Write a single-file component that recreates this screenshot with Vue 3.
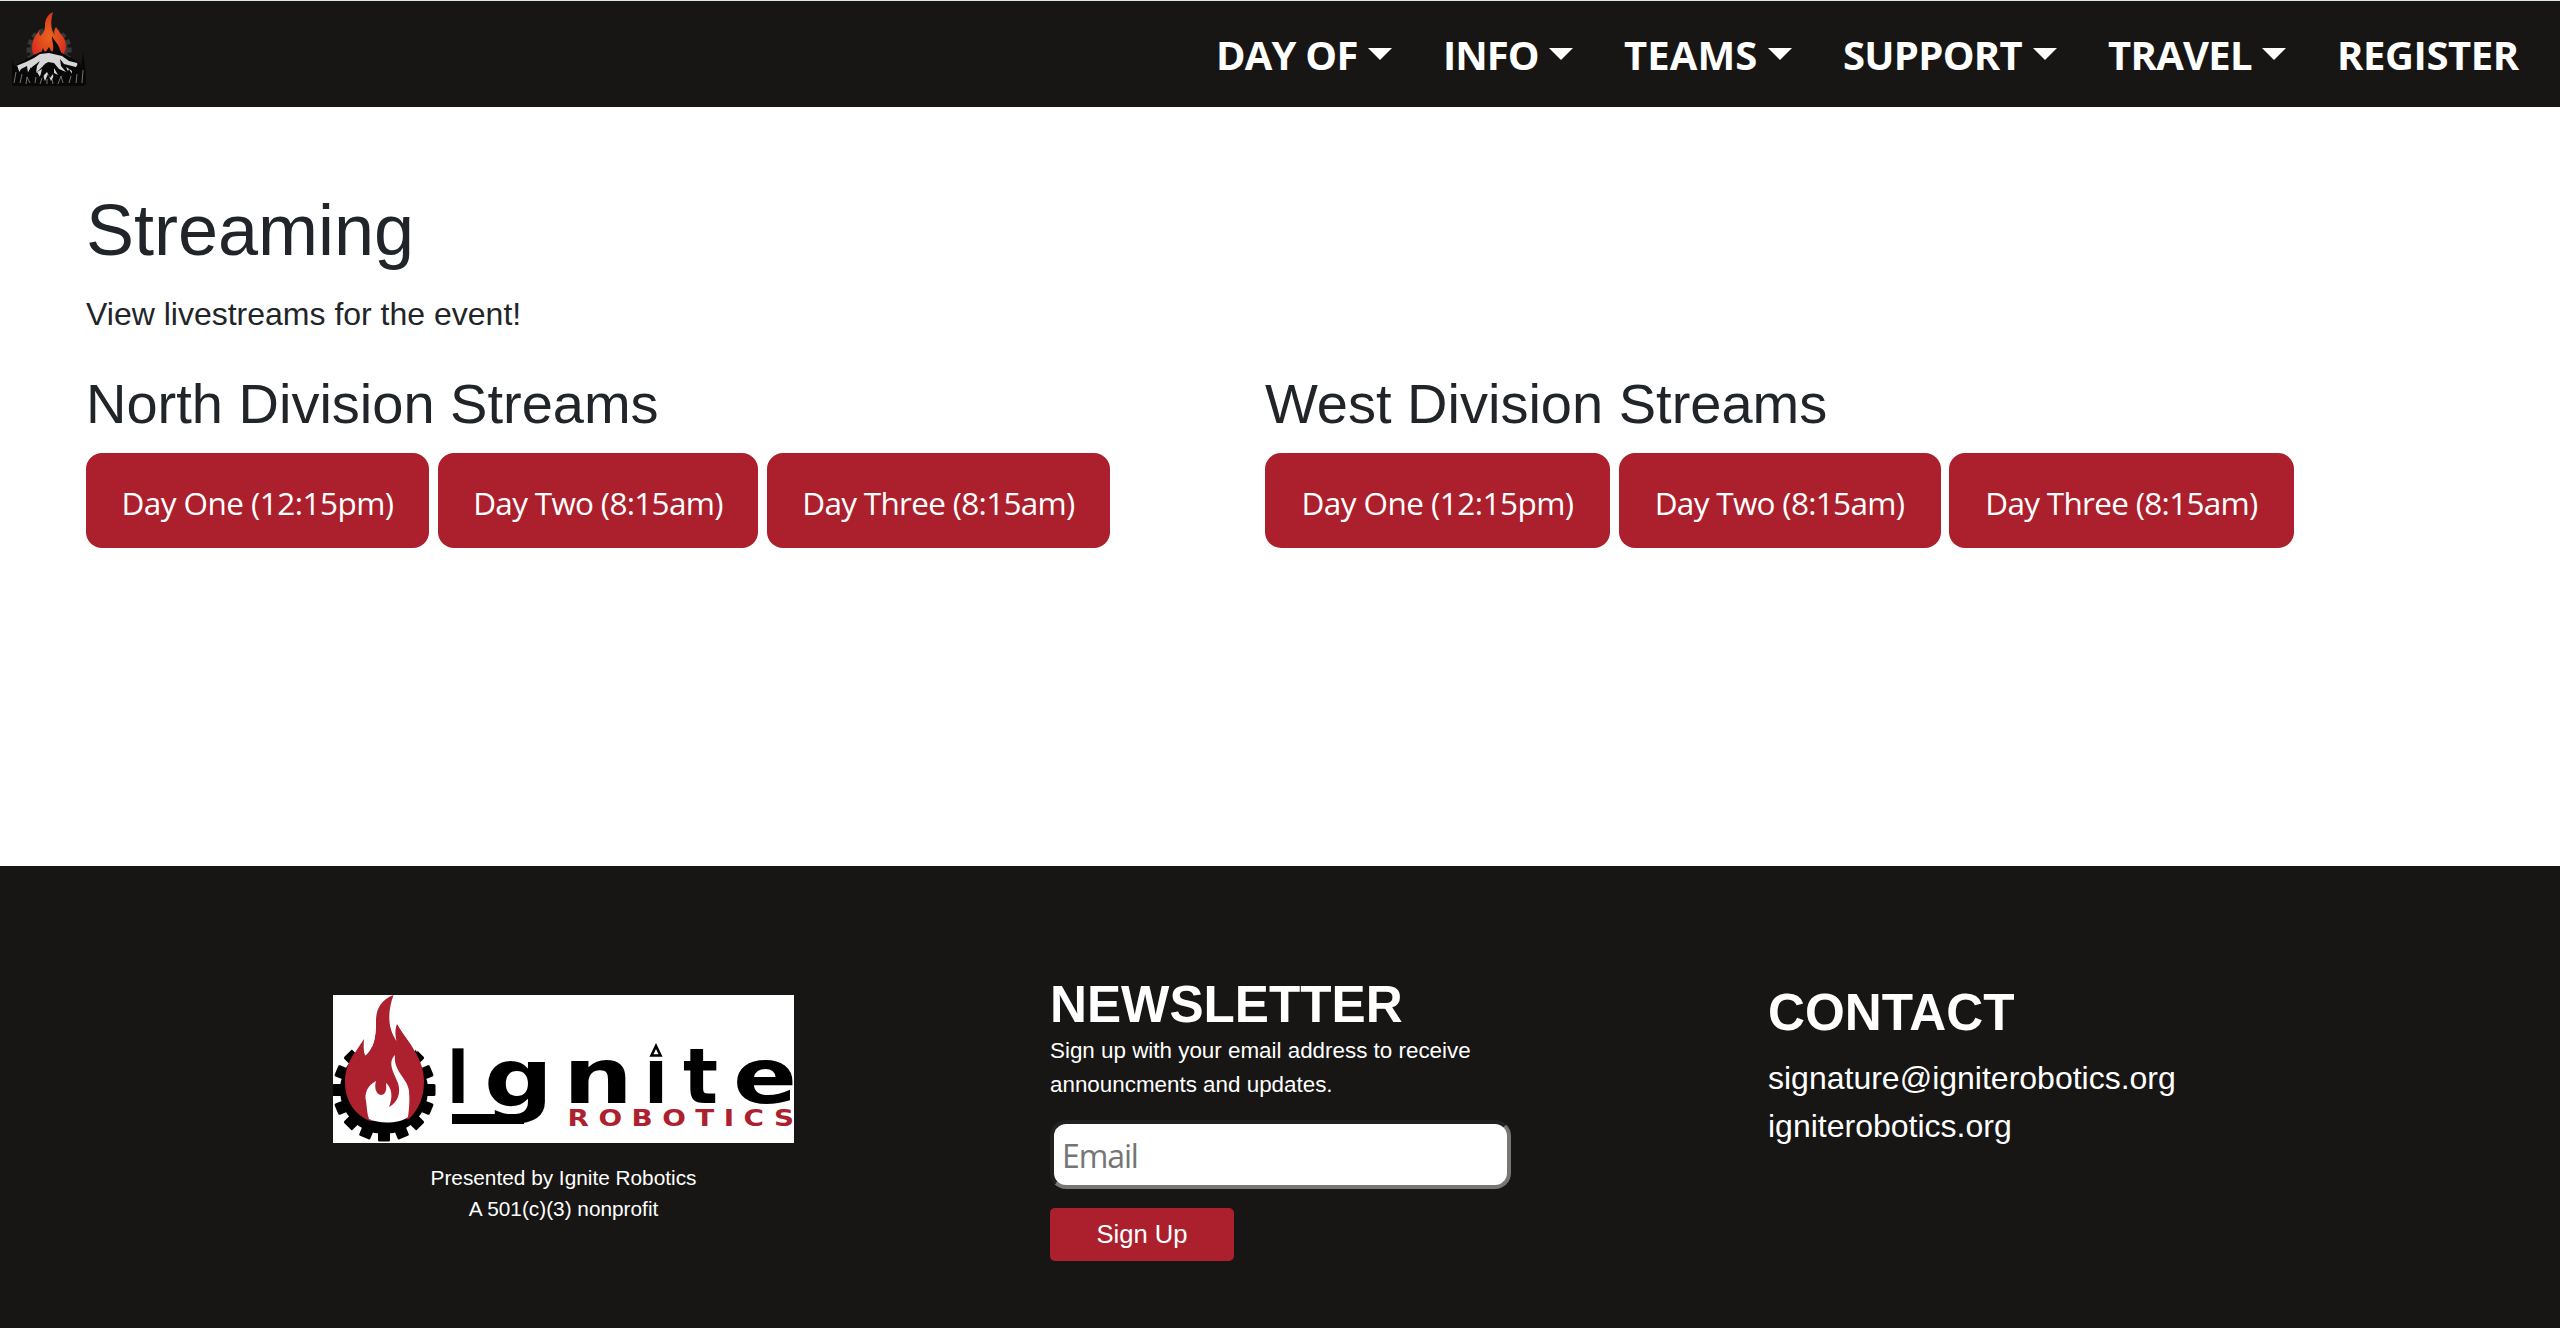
<script setup>
const menu = [
  { label: 'DAY OF', caret: true, cls: 'm-day' },
  { label: 'INFO', caret: true, cls: 'm-info' },
  { label: 'TEAMS', caret: true, cls: 'm-teams' },
  { label: 'SUPPORT', caret: true, cls: 'm-support' },
  { label: 'TRAVEL', caret: true, cls: 'm-travel' },
  { label: 'REGISTER', caret: false, cls: 'm-register' }
]
const days = [
  { label: 'Day One (12:15pm)', cls: 'd-one' },
  { label: 'Day Two (8:15am)', cls: 'd-two' },
  { label: 'Day Three (8:15am)', cls: 'd-three' }
]
const divisions = [
  { name: 'North Division Streams', cls: 'north' },
  { name: 'West Division Streams', cls: 'west' }
]
const gearTeeth = Array.from({ length: 16 }, (_, i) => i * 22.5)
</script>

<template>
  <div class="page">
    <header class="nav">
      <svg class="badge" width="74" height="76" viewBox="0 0 74 76">
        <defs>
          <radialGradient id="fire" cx="0.5" cy="0.5" r="0.6">
            <stop offset="0" stop-color="#e8641c" />
            <stop offset="0.5" stop-color="#e04a1e" />
            <stop offset="1" stop-color="#d8261f" />
          </radialGradient>
        </defs>
        <g fill="#383838">
          <circle cx="37" cy="38" r="19" />
          <rect v-for="a in gearTeeth" :key="a" x="34.500" y="15.500" width="5" height="6" :transform="`rotate(${a} 37 38)`" />
        </g>
        <path fill="url(#fire)" d="M41 0C35 3 33 8 33 14C33 18 31 22 28 24C27 22 27 20 28 18C22 24 20 30 20 36C20 43 24 48 37 48C48 48 54 42 54 34C54 26 48 22 44 15C42 18 42 20 43 23C39 19 38 10 41 0Z" />
        <path fill="#0a0a0a" d="M40 24C42 29 47 32 48 38L51 44L28 44L31 36L33 41L37 35L40 41C43 35 40 31 40 24Z" />
        <path fill="#080808" d="M2 54L20 44L28 40L37 39L50 41L66 50L72 74L1 74Z" />
        <path fill="#d6d6d6" d="M4 54L14 50L22 46L28 42L37 41L50 44L57 49L65 51L67 56L60 54L52 52L48 47L49 54L54 60L47 57L42 51L36 50L30 55L24 61L25 54L28 49L20 55L16 61L15 54L9 57L6 62Z" />
        <path fill="#d6d6d6" d="M25 60L30 57L28 65ZM42 56L46 63L42 61ZM54 55L60 59L59 66ZM32 63L35 60L38 66L41 62L42 70L30 70Z" />
        <path fill="#080808" d="M0 48L3 56L5 53L8 62L12 56L14 64L19 55L20 64L24 59L26 68L30 61L33 69L36 62L39 69L43 62L46 68L49 58L53 65L57 57L60 62L64 55L67 50L69 54L71 41L74 60V73H0ZM31 54L34 51L38 53L43 52L42 57L38 60L34 57Z" />
        <path fill="none" stroke="#a0a0a0" stroke-width="0.700" d="M2 71L4 60M8 71L10 62M14 72L15 65L18 71M23 71L24 65M28 72L30 66M35 72V67M41 72L40 67M46 72L49 64L51 71M57 71L59 64M64 71L65 62M70 71L71 58" />
      </svg>
      <nav class="menu">
        <a v-for="m in menu" :key="m.label" class="item" :class="m.cls"><span class="label">{{ m.label }}</span><i v-if="m.caret" class="caret"></i></a>
      </nav>
    </header>

    <main class="main">
      <h1>Streaming</h1>
      <p class="lead">View livestreams for the event!</p>
      <div class="divisions">
        <section v-for="d in divisions" :key="d.name" :class="d.cls">
          <h2>{{ d.name }}</h2>
          <div class="buttons">
            <a v-for="b in days" :key="b.label" class="btn" :class="b.cls"><span>{{ b.label }}</span></a>
          </div>
        </section>
      </div>
    </main>

    <footer class="footer">
      <div class="brand">
        <svg class="logo" width="461" height="148" viewBox="0 0 461 148">
          <rect width="461" height="148" fill="#fff" />
          <circle cx="51" cy="95" r="44" />
          <rect v-for="a in gearTeeth" :key="a" x="45" y="43.500" width="12" height="12" rx="1.500" :transform="`rotate(${a} 51 95)`" />
          <path fill="#ad202e" stroke="#fff" stroke-width="0" d="M60.500 0C48 5 43 14 43 26C43 42 41 54 32 61C30 56 30 50 31 44C22 58 12 68 12 87C12 106 22 120 37 126L76 124C86 114 91 102 91 86C91 64 76 48 64 29C62 34 62 40 63.500 46C55 34 54 18 60.500 0Z" />
          <path fill="#fff" d="M25 62L31 44C30 50 30 56 32 61C41 54 43 42 43 26L36 26V44H20V54ZM66 32C72 42 80 51 84 57L90 48L72 26Z" />
          <path fill="#ad202e" d="M31 44C26 52 18 62 15 71L32 75L50 60L43 42C41 52 39 57 32 61C30 56 30 50 31 44Z" />
          <path fill="#fff" d="M62 60C54 68 61 78 65 88C68 98 65 107 56 112C60 102 59 93 53 88C54 96 52 100 48 100C43 99 41 93 43 86C35 90 31 98 33 106C34 113 34 119 36 124C46 129 66 129 75 122C76 114 77 106 76 96C75 84 60 76 62 60Z" />
          <g class="word">
            <text x="114" y="107.500" font-size="74" textLength="22" lengthAdjust="spacingAndGlyphs">I</text>
            <text x="151" y="110.500" font-size="80" textLength="69" lengthAdjust="spacingAndGlyphs">g</text>
            <text x="230" y="107.500" font-size="76" textLength="70" lengthAdjust="spacingAndGlyphs">n</text>
            <text x="311" y="107.500" font-size="76" textLength="24" lengthAdjust="spacingAndGlyphs">i</text>
            <text x="350" y="107.500" font-size="76" textLength="35" lengthAdjust="spacingAndGlyphs">t</text>
            <text x="400" y="107.500" font-size="76" textLength="64" lengthAdjust="spacingAndGlyphs">e</text>
          </g>
          <rect x="119" y="119" width="72" height="10" />
          <rect x="314" y="46" width="18" height="18.500" fill="#fff" />
          <path d="M323 51L327.500 60.500H318.500Z" fill="none" stroke="#000" stroke-width="2.600" />
          <text class="sub" x="234.500" y="131" font-size="23.500" textLength="236" lengthAdjust="spacingAndGlyphs">ROBOTICS</text>
        </svg>
        <p>Presented by Ignite Robotics<br />A 501(c)(3) nonprofit</p>
      </div>
      <form class="news">
        <h3>NEWSLETTER</h3>
        <p>Sign up with your email address to receive announcments and updates.</p>
        <input type="text" placeholder="Email" />
        <button type="button">Sign Up</button>
      </form>
      <div class="contact">
        <h3>CONTACT</h3>
        <p>signature@igniterobotics.org<br />igniterobotics.org</p>
      </div>
    </footer>
  </div>
</template>

<style>
body { margin: 0; background: #fff; }
</style>

<style scoped>
* { box-sizing: border-box; }
.page { display: flex; flex-direction: column; width: 2560px; height: 1328px; overflow: hidden; font-family: "Liberation Sans", Arial, sans-serif; color: #212529; }
h1, h2, h3, p { margin: 0; font-weight: 400; }

.nav { display: flex; justify-content: space-between; align-items: flex-start; height: 107px; flex: none; border-top: 1px solid #dce9df; background: #171614; padding: 11px 37px 0 12px; }
.menu { display: flex; padding-top: 15px; color: #fff; font: 700 40px/56px "Open Sans", "Noto Sans", sans-serif; }
.item { display: flex; white-space: nowrap; }
.label { flex: none; }
.caret { width: 24px; height: 12px; margin-top: 21px; background: #fff; clip-path: polygon(0 0, 100% 0, 50% 100%); margin-left: auto; }
.m-day { width: 176px; margin-right: 51px; letter-spacing: -0.8px; }
.m-info { width: 130px; margin-right: 51px; letter-spacing: -1px; }
.m-teams { width: 168px; margin-right: 51px; letter-spacing: 0.1px; }
.m-support { width: 214px; margin-right: 51px; letter-spacing: -0.7px; }
.m-travel { width: 178px; margin-right: 51px; letter-spacing: -0.7px; }
.m-register { width: 186px; letter-spacing: -0.400px; }

.main { flex: none; height: 759px; padding: 80px 86px 0; }
h1 { font-size: 72px; line-height: 86px; }
.lead { font-size: 32px; line-height: 48px; margin-top: 17px; }
.divisions { display: flex; margin-top: 32px; }
.north, .west { width: 1179px; }
h2 { font-size: 56px; line-height: 67px; }
.buttons { display: flex; gap: 9px; margin-top: 16px; }
.btn { display: flex; justify-content: center; align-items: center; height: 95px; border-radius: 16px; background: #ac1f2d; color: #fff; font: 31.500px/48px "Open Sans", "Noto Sans", sans-serif; letter-spacing: -0.550px; white-space: nowrap; padding-top: 4px; }
.d-one, .d-three { width: 343px; }
.d-two, .d-three { letter-spacing: -0.700px; }
.d-two { width: 320px; }
.west .d-one, .west .d-three { width: 345px; }
.west .d-two { width: 322px; }
.west .buttons { gap: 8.500px; }

.footer { display: flex; flex: 1; background: #171614; color: #fff; }
.brand { width: 461px; margin: 129px 256px 0 333px; text-align: center; }
.logo { display: block; }
.brand p { font-size: 20.800px; line-height: 31.200px; margin-top: 19px; }
.word { font-family: "DejaVu Sans", sans-serif; font-weight: 700; }
.sub { font-family: "DejaVu Sans", sans-serif; font-weight: 700; letter-spacing: 8px; fill: #ad202e; }
.news { width: 461px; margin: 108px 257px 0 0; }
h3 { font-weight: 700; font-size: 51.200px; line-height: 61px; }
.news p { font-size: 22.400px; line-height: 33.600px; margin-top: -1px; }
input { display: block; width: 461px; height: 69px; margin-top: 19px; padding: 3px 8px 1px; border: 4px inset #767676; border-radius: 16px; background: #fff; font: 32px "Open Sans", "Noto Sans", sans-serif; letter-spacing: -1.100px; }
input::placeholder { color: #757575; opacity: 1; }
button { display: block; width: 184px; height: 53px; margin-top: 19px; border: 0; border-radius: 5px; padding: 0; background: #ac1f2d; color: #fff; font: 25.600px "Liberation Sans", Arial, sans-serif; }
.contact { margin-top: 116px; }
.contact p { font-size: 32px; line-height: 48px; margin-top: 11px; }
</style>
